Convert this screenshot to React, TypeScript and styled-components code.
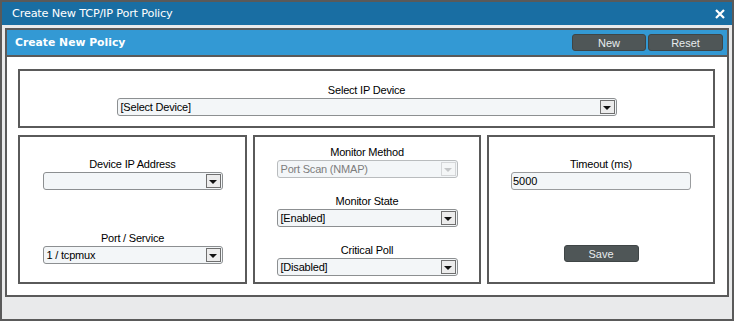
import * as React from 'react';
import styled, { createGlobalStyle } from 'styled-components';

const GlobalStyle = createGlobalStyle`
    html, body {
        margin: 0;
        padding: 0;
        background: #ffffff;
    }
    * {
        box-sizing: border-box;
    }
`;

const StyledWindow = styled.div`
    width: 734px;
    height: 321px;
    border: 2px solid #5a5a5a;
    background-color: #e9eaeb;
    display: flex;
    flex-direction: column;
    font-family: 'Liberation Sans', Arial, sans-serif;
`;

const StyledTitleBar = styled.div`
    height: 23px;
    flex: none;
    background-color: #196ea3;
    color: #ffffff;
    display: flex;
    align-items: center;
    justify-content: space-between;
    padding: 0 5px 0 10px;
    font-family: 'DejaVu Sans', Verdana, sans-serif;
    font-size: 11.3px;
    letter-spacing: -0.2px;
`;

const StyledClose = styled.button`
    width: 14px;
    height: 14px;
    padding: 0;
    border: none;
    background: none;
    display: flex;
    align-items: center;
    justify-content: center;
`;

const StyledBody = styled.div`
    flex: 1;
    padding: 3px 3px 22px 3px;
    display: flex;
`;

const StyledPanel = styled.div`
    flex: 1;
    border: 2px solid #5a5a5a;
    background-color: #ffffff;
    display: flex;
    flex-direction: column;
`;

const StyledPanelHeader = styled.div`
    height: 27px;
    flex: none;
    background-color: #3399d4;
    border-bottom: 2px solid #5a5a5a;
    display: flex;
    align-items: center;
    justify-content: space-between;
    padding: 0 4px 0 8px;
    color: #ffffff;
    font-family: 'DejaVu Sans', Verdana, sans-serif;
    font-weight: bold;
    font-size: 10.8px;
`;

const StyledButtonGroup = styled.div`
    display: flex;
    gap: 2px;
`;

const StyledDarkButton = styled.button<{ $width: number }>`
    width: ${(p) => p.$width}px;
    height: 17px;
    padding: 0;
    border: 1px solid #3f4546;
    border-radius: 3px;
    background-color: #4f5657;
    color: #e8ecee;
    font-family: 'Liberation Sans', Arial, sans-serif;
    font-size: 11px;
    cursor: pointer;
`;

const StyledContent = styled.div`
    flex: 1;
    padding: 12px 12px 11px 11px;
    display: flex;
    flex-direction: column;
    gap: 7px;
`;

const StyledBox = styled.div<{ $top: number }>`
    border: 2px solid #5a5a5a;
    display: flex;
    flex-direction: column;
    align-items: center;
    padding-top: ${(p) => p.$top}px;
`;

const StyledDeviceBox = styled(StyledBox)`
    height: 59px;
    flex: none;
`;

const StyledRow = styled.div`
    flex: 1;
    display: grid;
    grid-template-columns: 229px 228px 228px;
    gap: 6px;
`;

const StyledField = styled.div<{ $gap: number }>`
    display: flex;
    flex-direction: column;
    align-items: center;
    margin-top: ${(p) => p.$gap}px;
`;

const StyledLabel = styled.label`
    font-size: 11px;
    line-height: 14px;
    letter-spacing: -0.2px;
    color: #000000;
    margin-bottom: 1px;
`;

const StyledSelect = styled.div<{ $width: number; $disabled?: boolean }>`
    width: ${(p) => p.$width}px;
    height: 18px;
    border: 1px solid ${(p) => (p.$disabled ? '#b9bcbe' : '#8c8f91')};
    border-radius: 3px;
    background-color: #f3f6f8;
    display: flex;
    align-items: center;
    justify-content: space-between;
    padding: 0 1px 0 3px;
    font-size: 11px;
    letter-spacing: -0.2px;
    color: ${(p) => (p.$disabled ? '#7d7d7d' : '#000000')};
`;

const StyledArrow = styled.span<{ $disabled?: boolean }>`
    width: 15px;
    height: 14px;
    border: 1px solid ${(p) => (p.$disabled ? '#d4d6d8' : '#6f6f6f')};
    background-color: ${(p) => (p.$disabled ? '#f4f6f7' : '#ececec')};
    display: flex;
    align-items: center;
    justify-content: center;

    &::after {
        content: '';
        border-left: 4px solid transparent;
        border-right: 4px solid transparent;
        border-top: 4px solid ${(p) => (p.$disabled ? '#c4c6c8' : '#111111')};
        margin-top: 1px;
    }
`;

const StyledInput = styled.input`
    width: 180px;
    height: 18px;
    border: 1px solid #9a9c9e;
    border-radius: 3px;
    background-color: #f3f6f8;
    padding: 0 1px;
    font-family: 'Liberation Sans', Arial, sans-serif;
    font-size: 11px;
    color: #000000;
    outline: none;
`;

const Select: React.FunctionComponent<{ value: string; width: number; disabled?: boolean }> = ({
    value,
    width,
    disabled,
}) => (
    <StyledSelect $width={width} $disabled={disabled}>
        <span>{value}</span>
        <StyledArrow $disabled={disabled} />
    </StyledSelect>
);

export default function App() {
    return (
        <>
            <GlobalStyle />
            <StyledWindow>
                <StyledTitleBar>
                    <span>Create New TCP/IP Port Policy</span>
                    <StyledClose>
                        <svg width="10" height="10" viewBox="0 0 10 10">
                            <path d="M1 1 L9 9 M9 1 L1 9" stroke="#ffffff" strokeWidth="2.2" />
                        </svg>
                    </StyledClose>
                </StyledTitleBar>
                <StyledBody>
                    <StyledPanel>
                        <StyledPanelHeader>
                            <span>Create New Policy</span>
                            <StyledButtonGroup>
                                <StyledDarkButton $width={74}>New</StyledDarkButton>
                                <StyledDarkButton $width={75}>Reset</StyledDarkButton>
                            </StyledButtonGroup>
                        </StyledPanelHeader>
                        <StyledContent>
                            <StyledDeviceBox $top={12}>
                                <StyledLabel>Select IP Device</StyledLabel>
                                <Select value="[Select Device]" width={500} />
                            </StyledDeviceBox>
                            <StyledRow>
                                <StyledBox $top={20}>
                                    <StyledField $gap={0}>
                                        <StyledLabel>Device IP Address</StyledLabel>
                                        <Select value="" width={180} />
                                    </StyledField>
                                    <StyledField $gap={41}>
                                        <StyledLabel>Port / Service</StyledLabel>
                                        <Select value="1 / tcpmux" width={180} />
                                    </StyledField>
                                </StyledBox>
                                <StyledBox $top={8}>
                                    <StyledField $gap={0}>
                                        <StyledLabel>Monitor Method</StyledLabel>
                                        <Select value="Port Scan (NMAP)" width={181} disabled />
                                    </StyledField>
                                    <StyledField $gap={16}>
                                        <StyledLabel>Monitor State</StyledLabel>
                                        <Select value="[Enabled]" width={181} />
                                    </StyledField>
                                    <StyledField $gap={16}>
                                        <StyledLabel>Critical Poll</StyledLabel>
                                        <Select value="[Disabled]" width={181} />
                                    </StyledField>
                                </StyledBox>
                                <StyledBox $top={20}>
                                    <StyledField $gap={0}>
                                        <StyledLabel>Timeout (ms)</StyledLabel>
                                        <StyledInput defaultValue="5000" />
                                    </StyledField>
                                    <StyledField $gap={55}>
                                        <StyledDarkButton $width={75}>Save</StyledDarkButton>
                                    </StyledField>
                                </StyledBox>
                            </StyledRow>
                        </StyledContent>
                    </StyledPanel>
                </StyledBody>
            </StyledWindow>
        </>
    );
}
